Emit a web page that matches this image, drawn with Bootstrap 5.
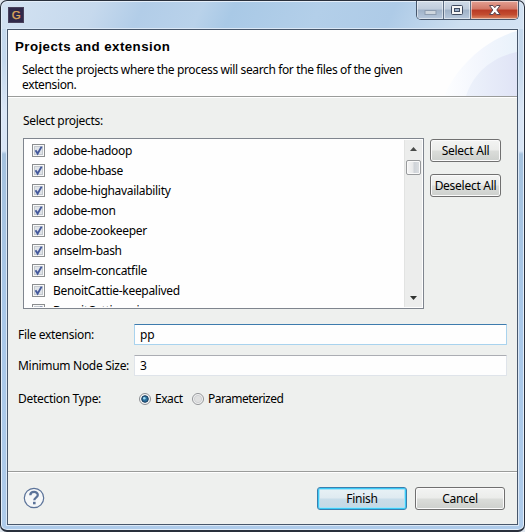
<!DOCTYPE html>
<html lang="en">
<head>
<meta charset="utf-8">
<meta name="viewport" content="width=device-width, initial-scale=1">
<title>Projects and extension</title>
<link href="https://cdn.jsdelivr.net/npm/bootstrap@5.3.0/dist/css/bootstrap.min.css" rel="stylesheet">
<style>
body{background:#dfe6ee;font-family:"Noto Sans","Open Sans",sans-serif;font-size:12px;line-height:15px;color:#000;letter-spacing:-.3px}
.win{width:525px;height:532px;border:1px solid #29303c;border-bottom-width:2px;border-radius:7px;padding:0 6px 6px;
 background:linear-gradient(115deg,#d3e2f2 0,#c6d9ed 18%,#b2cde8 27%,#b9d2ea 38%,#a9c9e6 44%,#b3cfe9 60%,#aecbe7 74%,#cddff0 88%,#d3e2f3) 0 0/100% 28px no-repeat,linear-gradient(#c6d9ec 0,#c4d8ed 60px,#dae6f5 110px,#d8e5f5 150px,#a5c2de 153px,#a9c8e9 320px,#aecbea);
 box-shadow:inset 0 0 0 1px #e4eef9}
.titlebar{height:28px}
.app-icon{margin:6px 0 0 1px}
.caption{height:19px;border:1px solid #46566c;border-top:0;border-radius:0 0 5px 5px;overflow:hidden;width:103px;margin-right:-1px}
.cap{border-right:1px solid #5d6d83;background:linear-gradient(#d0dbe8,#bfccdc 45%,#9fb1c7 50%,#b7c8dc);box-shadow:inset 0 0 0 1px rgba(255,255,255,.5)}
.cap-min,.cap-max{width:27px}
.cap-close{border:0;background:linear-gradient(#e3a093,#d17766 45%,#b83a25 50%,#c34c30 75%,#dc8a68)}
.client{height:496px;border:1px solid #48576b;background:#eef0ee;box-shadow:0 0 0 1px #dbe8f6;flex:none}
.head{height:67px;background:#fefefe;border-bottom:1px solid #9a9c9a;padding:8px 7px 0;box-shadow:0 1px #fff;position:relative}
.head-art{position:absolute;right:0;top:0}
.head h1{font:bold 13.3px/17px "Liberation Sans",Arial,sans-serif;letter-spacing:.44px;margin:0;position:relative}
.head p{margin:7px 0 0 7px;width:400px;position:relative;letter-spacing:-.37px}
.main{height:374px;padding:16px 10px 0}
.list-label{margin:0 0 10px 5px}
.picker{margin-left:5px;gap:6px}
.listbox{width:401px;height:171px;border:1px solid #7f858e;background:#fefefe;overflow:hidden}
.items{padding:1px 0 0 8px;margin:0;height:168px;overflow:hidden;letter-spacing:-.31px}
.items li{height:20px;gap:8px}
.track{width:18px;margin:1px;background:#ecedec;border-left:1px solid #e2e3e2;height:167px;padding:7px 1px 0 0}
.thumb{width:15px;height:15px;border:1px solid #989a9c;border-radius:2px;background:linear-gradient(90deg,#f5f5f5,#e8e9ea 45%,#cfd3d8 55%,#dcdfe2);margin-top:9px;box-shadow:inset 0 0 0 1px #fafafa}
.arrow-down{margin:auto 0 7px}
.win-btn{font-size:12px;line-height:15px;letter-spacing:-.27px;color:#000;padding:0;border:1px solid #707070;border-radius:3px;height:23px;background:linear-gradient(#f3f4f3,#ebecea 48%,#dbddda 52%,#cdd0cd);box-shadow:inset 0 0 0 1px #fbfbfb}
.side{width:71px;gap:12px;padding-top:1px}
.foot-btn{width:90px}
.primary{border-color:#3a7fae;background:linear-gradient(#e8f2f6,#dfeaf1 48%,#c9dde9 52%,#c4d9e5);box-shadow:inset 0 0 0 1px #3ccbf7,inset 0 0 0 2px #a8e2f6}
.field label{width:116px}
.field input{font-size:12px;line-height:15px;letter-spacing:-.17px;color:#000;width:373px;height:21px;padding:1px 5px;border-radius:1px;border:1px solid #dfe4ea;border-top-color:#abadb3;background:#fefefe;box-shadow:none}
.field input.active{border-color:#a9d3ee;border-top-color:#3d7bad}
.field-ext{margin-top:15px}
.field-size{margin-top:10px}
.field-type{margin-top:15px}
.radio-dot{margin:0 4px 0 5px}
.option{width:37px;letter-spacing:-.45px}
.option-last{letter-spacing:-.55px}
.foot{border-top:1px solid #9a9c9a;box-shadow:inset 0 1px #fff;padding:15px 12px 0 15px}
</style>
</head>
<body class="m-0 overflow-hidden">
<div class="win d-flex flex-column">
  <div class="titlebar d-flex justify-content-between flex-shrink-0">
    <svg class="app-icon" width="16" height="16"><rect width="16" height="16" fill="#30294a"/><rect x=".5" y=".5" width="15" height="15" fill="none" stroke="#49425c"/><text x="8" y="12.2" text-anchor="middle" font-family="Liberation Sans" font-size="11.5" fill="#e0aa5c" stroke="#e0aa5c" stroke-width=".25">G</text></svg>
    <div class="caption d-flex">
      <div class="cap cap-min"><svg width="26" height="18"><rect x="8" y="9.5" width="11" height="4" fill="#ced6de" stroke="#8d9caf"/></svg></div>
      <div class="cap cap-max"><svg width="26" height="18"><rect x="7.500" y="4.500" width="11" height="9" rx="1" fill="#f6f6f6" stroke="#404b60"/><rect x="10.500" y="7.500" width="5" height="3" fill="#9db0ca" stroke="#404b60"/></svg></div>
      <div class="cap cap-close flex-fill"><svg width="47" height="18"><path d="M18.500 4.500h3.500l1.800 2.200 1.800-2.200h3.500l-3.300 4.500 3.300 4.500h-3.500l-1.800-2.200-1.800 2.200h-3.500l3.300-4.500z" fill="#fff" stroke="#5b4651"/></svg></div>
    </div>
  </div>
  <div class="client d-flex flex-column">
    <header class="head">
      <svg class="head-art" width="75" height="66"><defs><linearGradient id="sweep"><stop offset="0" stop-color="#fdfeff"/><stop offset=".5" stop-color="#f3f6fd"/><stop offset="1" stop-color="#e9f2fb"/></linearGradient><linearGradient id="fold"><stop offset="0" stop-color="#edf2fb"/><stop offset="1" stop-color="#e0e4f6"/></linearGradient></defs><path d="M2 66C14 38 42 10 75 1v65z" fill="url(#sweep)"/><path d="M24 66C30 46 48 27 75 22v44z" fill="url(#fold)"/></svg>
      <h1>Projects and extension</h1>
      <p>Select the projects where the process will search for the files of the given extension.</p>
    </header>
    <main class="main">
      <div class="list-label">Select projects:</div>
      <div class="picker d-flex align-items-start">
        <div class="listbox d-flex">
          <ul class="items list-unstyled flex-fill" id="items"></ul>
          <div class="track d-flex flex-column align-items-center flex-shrink-0">
            <svg width="7" height="4" class="flex-shrink-0"><path d="M0 4 3.500 0 7 4z" fill="#484a48"/></svg>
            <div class="thumb flex-shrink-0"></div>
            <svg width="7" height="4" class="arrow-down flex-shrink-0"><path d="M0 0h7L3.500 4z" fill="#303230"/></svg>
          </div>
        </div>
        <div class="side d-flex flex-column">
          <button class="btn win-btn">Select All</button>
          <button class="btn win-btn">Deselect All</button>
        </div>
      </div>
      <div class="field field-ext d-flex align-items-center"><label for="ext">File extension:</label><input class="form-control active" id="ext" value="pp"></div>
      <div class="field field-size d-flex align-items-center"><label for="size">Minimum Node Size:</label><input class="form-control" id="size" value="3"></div>
      <div class="field field-type d-flex align-items-center"><label>Detection Type:</label>
        <svg class="radio-dot" width="12" height="12" viewBox="0 0 12 12"><circle cx="6" cy="6" r="5.500" fill="#f7f7f7" stroke="#8c8f93"/><circle cx="6" cy="6" r="3.300" fill="#2b6f9c" stroke="#163a5c"/><circle cx="5.300" cy="5.200" r="1.300" fill="#9fdcf5"/></svg><span class="option">Exact</span>
        <svg width="12" height="12" viewBox="0 0 12 12" class="me-1 flex-shrink-0"><circle cx="6" cy="6" r="5.500" fill="#f6f6f6" stroke="#919497"/><circle cx="6" cy="6" r="3.700" fill="#dfe0e0" stroke="#c6c9cb" stroke-width=".7"/></svg><span class="option-last">Parameterized</span>
      </div>
    </main>
    <footer class="foot flex-fill d-flex align-items-start">
      <svg width="22" height="22" viewBox="0 0 22 22"><circle cx="11" cy="11" r="9.700" fill="#f5f7f8" stroke="#5b7399" stroke-width="1.200"/><path d="M7.300 8.300C7.300 3.900 14.800 3.900 14.800 8c0 2.700-3.500 2.600-3.500 5.200" fill="none" stroke="#5b7399" stroke-width="2.300"/><rect x="10" y="14.800" width="2.600" height="2.500" fill="#5b7399"/></svg>
      <button class="btn win-btn primary foot-btn ms-auto">Finish</button>
      <button class="btn win-btn foot-btn ms-2">Cancel</button>
    </footer>
  </div>
</div>
<script>
const names=["adobe-hadoop","adobe-hbase","adobe-highavailability","adobe-mon","adobe-zookeeper","anselm-bash","anselm-concatfile","BenoitCattie-keepalived","BenoitCattie-nginx"];
const box='<svg width="13" height="13"><rect x=".5" y=".5" width="12" height="12" fill="#f8f8f8" stroke="#8b8e90"/><rect x="2.500" y="2.500" width="8" height="8" fill="#dfe3e8" stroke="#c3c8ce"/><path d="M3.500 6.300 5.600 9.600 9.600 2.600" fill="none" stroke="#44599b" stroke-width="1.900"/></svg>';
document.getElementById("items").innerHTML=names.map(n=>`<li class="d-flex align-items-center">${box}<span>${n}</span></li>`).join("");
</script>
<script src="https://cdn.jsdelivr.net/npm/bootstrap@5.3.0/dist/js/bootstrap.bundle.min.js"></script>
</body>
</html>
